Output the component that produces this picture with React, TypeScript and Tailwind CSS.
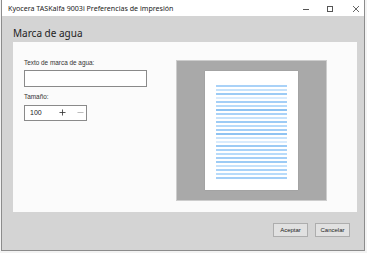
import { Plus, Minus } from "lucide-react";

const lineColors = [
  "bg-[#a9d2f8]",
  "bg-[#c6e2fb]",
  "bg-[#9ccbf5]",
  "bg-[#d8ebfd]",
  "bg-[#a4cff7]",
  "bg-[#b8dbfa]",
  "bg-[#8fc3f2]",
  "bg-[#a9d2f8]",
  "bg-[#c6e2fb]",
  "bg-[#9ccbf5]",
  "bg-[#b8dbfa]",
  "bg-[#a4cff7]",
  "bg-[#8fc3f2]",
  "bg-[#c6e2fb]",
  "bg-[#d8ebfd]",
  "bg-[#9ccbf5]",
  "bg-[#a9d2f8]",
  "bg-[#b8dbfa]",
  "bg-[#a4cff7]",
  "bg-[#9ccbf5]",
  "bg-[#c6e2fb]",
  "bg-[#a9d2f8]",
  "bg-[#b8dbfa]",
  "bg-[#a4cff7]",
];

const TitleBar = () => (
  <div className="h-[16px] bg-white flex items-center pl-[6px] pt-[2px] shrink-0">
    <span className="font-['Noto_Sans'] text-[7.1px] text-[#1a1a1a] leading-none flex-1 whitespace-nowrap">
      Kyocera TASKalfa 9003i Preferencias de impresión
    </span>
    {/* window controls */}
    <div className="flex items-center h-full">
      <svg width="6" height="6" viewBox="0 0 6 6" className="mr-[18px]">
        <line x1="0" y1="3.5" x2="6" y2="3.5" stroke="#555" strokeWidth="1" />
      </svg>
      <svg width="6" height="6" viewBox="0 0 6 6" className="mr-[20px]">
        <rect x="0.5" y="0.5" width="5" height="5" fill="none" stroke="#555" strokeWidth="1" />
      </svg>
      <svg width="6" height="6" viewBox="0 0 6 6" className="mr-[5px]">
        <path d="M0 0 L6 6 M6 0 L0 6" stroke="#555" strokeWidth="0.9" />
      </svg>
    </div>
  </div>
);

const PagePreview = () => (
  <div className="w-[151px] h-[141px] bg-[#a9a9a9] border border-[#cdcdcd] flex items-center justify-center">
    <div className="w-[93px] h-[119px] bg-white shadow-[0_0_1px_#8a8a8a] pt-[14px] px-[11px] flex flex-col gap-[2px]">
      {lineColors.map((c, i) => (
        <div key={i} className={`h-[2px] w-full ${c}`} />
      ))}
    </div>
  </div>
);

export default function App() {
  return (
    <div className="w-[367px] h-[253px] bg-[#f3f3f3] overflow-hidden font-['Liberation_Sans']">
      <div className="ml-[1px] w-[364px] h-[251px] border border-t-0 border-[#8c8c8c] flex flex-col">
        <TitleBar />

        {/* body */}
        <div className="flex-1 bg-[#d4d4d4] flex flex-col pl-[11px] pr-[7px]">
          <div className="h-[26px] flex items-end pb-[4px]">
            <span className="font-['Noto_Sans'] text-[10px] leading-none text-[#222]">
              Marca de agua
            </span>
          </div>

          {/* main panel */}
          <div className="h-[170px] bg-[#fbfbfb] flex pl-[11px] pt-[18px]">
            <div className="w-[152px] flex flex-col">
              <span className="text-[6.4px] leading-none text-[#333]">
                Texto de marca de agua:
              </span>
              <div className="mt-[4px] w-[123px] h-[17px] border border-[#8a8a8a] bg-white" />

              <span className="mt-[7px] text-[6.4px] leading-none text-[#333]">Tamaño:</span>
              <div className="mt-[4px] w-[63px] h-[16px] border border-[#8a8a8a] bg-white flex items-center pl-[5px]">
                <span className="text-[7px] leading-none text-[#222] w-[28px]">100</span>
                <Plus size={9} strokeWidth={2.2} color="#333" className="mr-[9px]" />
                <Minus size={9} strokeWidth={1.3} color="#777" />
              </div>
            </div>

            <PagePreview />
          </div>

          {/* buttons */}
          <div className="flex justify-end gap-[7px] pr-[7px] mt-[11px]">
            <button className="w-[35px] h-[14px] border border-[#adadad] bg-[#e1e1e1] text-[6px] leading-none text-[#222]">
              Aceptar
            </button>
            <button className="w-[35px] h-[14px] border border-[#adadad] bg-[#e1e1e1] text-[6px] leading-none text-[#222]">
              Cancelar
            </button>
          </div>
        </div>
      </div>
    </div>
  );
}
